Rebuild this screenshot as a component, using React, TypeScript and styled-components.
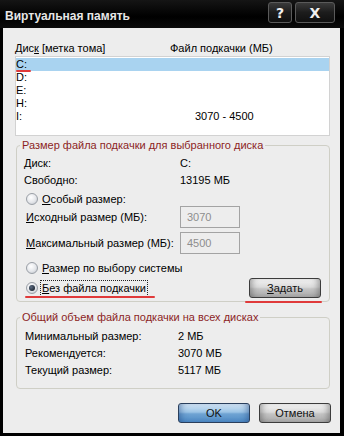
import React from 'react';
import styled, { createGlobalStyle } from 'styled-components';

const Global = createGlobalStyle`
  html, body { margin: 0; padding: 0; background: #000; }
  body { font-family: "Liberation Sans", Arial, sans-serif; font-size: 11px; color: #000; }
  * { box-sizing: border-box; }
`;

const Window = styled.div`
  width: 344px;
  height: 436px;
  background: #000;
  display: flex;
  flex-direction: column;
`;

const TitleBar = styled.div`
  height: 28px;
  flex: none;
  display: flex;
  justify-content: space-between;
  background: linear-gradient(#151515, #050505 45%, #000 60%, #0b0b0b);
`;

const Title = styled.div`
  padding: 9px 0 0 5px;
  line-height: 14px;
  font-size: 12px;
  font-weight: bold;
  color: #e6e6e6;
`;

const TitleButtons = styled.div`
  display: flex;
  gap: 3px;
  padding: 2px 9px 0 0;
`;

const CapButton = styled.div<{ $w: number }>`
  width: ${(p) => p.$w}px;
  height: 21px;
  border: 1px solid #5a5a5a;
  border-radius: 3px;
  background: linear-gradient(#3a3a3a, #1c1c1c 50%, #101010);
  color: #f0f0f0;
  font-weight: bold;
  font-size: 14px;
  display: flex;
  align-items: center;
  justify-content: center;
  font-family: "DejaVu Sans", sans-serif;
`;

const Frame = styled.div`
  flex: 1;
  display: flex;
  padding: 0 4px 3px 3px;
`;

const Client = styled.div`
  flex: 1;
  background: #ededed;
  padding: 14px 10px 0 12px;
  display: flex;
  flex-direction: column;
`;

const HeaderRow = styled.div`
  display: flex;
  height: 13px;
  line-height: 13px;
`;

const Cell = styled.div<{ $w?: number }>`
  width: ${(p) => (p.$w ? `${p.$w}px` : 'auto')};
  flex: none;
  white-space: nowrap;
`;

const ListBox = styled.div`
  position: relative;
  margin-top: 1px;
  height: 80px;
  border: 1px solid #d2d2d2;
  background: #fff;
  padding-top: 1px;
`;

const ListRow = styled.div<{ $sel?: boolean }>`
  display: flex;
  height: 13px;
  line-height: 13px;
  padding-left: 0px;
  background: ${(p) => (p.$sel ? '#a9d3f0' : 'transparent')};
`;

const Mark = styled.div<{ $x: number; $y: number; $w: number }>`
  position: absolute;
  left: ${(p) => p.$x}px;
  top: ${(p) => p.$y}px;
  width: ${(p) => p.$w}px;
  height: 2px;
  background: #e03a3a;
  border-radius: 1px;
`;

const Group = styled.fieldset<{ $mt: number }>`
  margin: ${(p) => p.$mt}px 0 0 1px;
  padding: 0 3px 0 3px;
  border: 1px solid #cfcfc6;
  border-radius: 4px;
  min-width: 0;
`;

const Legend = styled.legend`
  padding: 0 2px;
  line-height: 13px;
  color: #8c1f1f;
`;

const GroupBody = styled.div<{ $pl: number; $pt: number; $pb: number }>`
  position: relative;
  padding: ${(p) => p.$pt}px 5px ${(p) => p.$pb}px ${(p) => p.$pl}px;
  display: flex;
  flex-direction: column;
`;

const InfoRow = styled.div`
  display: flex;
  height: 17px;
  line-height: 17px;
`;

const RadioRow = styled.div<{ $mt: number; $h?: number }>`
  display: flex;
  align-items: center;
  margin: ${(p) => p.$mt}px 0 0 2px;
  height: ${(p) => p.$h ?? 14}px;
  justify-content: space-between;
`;

const RadioLabel = styled.div`
  display: flex;
  align-items: center;
  gap: 2px;
`;

const Radio = styled.div<{ $on?: boolean }>`
  width: 12px;
  height: 12px;
  border-radius: 50%;
  border: 1px solid #9a9fa6;
  background: radial-gradient(circle at 40% 35%, #ffffff, #e4e6ea 55%, #b9bec6);
  display: flex;
  align-items: center;
  justify-content: center;
  &::after {
    content: '';
    display: ${(p) => (p.$on ? 'block' : 'none')};
    width: 6px;
    height: 6px;
    border-radius: 50%;
    background: radial-gradient(circle at 35% 35%, #5a6a80, #10161f);
  }
`;

const FocusText = styled.span<{ $focus?: boolean }>`
  padding: 1px 1px;
  border: 1px dotted ${(p) => (p.$focus ? '#222' : 'transparent')};
  line-height: 13px;
  white-space: nowrap;
`;

const FieldRow = styled.div<{ $mt: number }>`
  display: flex;
  align-items: center;
  margin: ${(p) => p.$mt}px 0 0 2px;
  height: 22px;
`;

const TextBox = styled.div`
  width: 60px;
  height: 22px;
  border: 1px solid #a3a3a3;
  background: #ededed;
  color: #8e8e8e;
  padding: 3px 0 0 6px;
  line-height: 14px;
`;

const Button = styled.div<{ $primary?: boolean }>`
  width: 72px;
  height: 20px;
  border: 1px solid ${(p) => (p.$primary ? '#2a3f5c' : '#3c3c3c')};
  border-radius: 3px;
  display: flex;
  align-items: center;
  justify-content: center;
  line-height: 13px;
  background: ${(p) =>
    p.$primary
      ? 'linear-gradient(#d4e6f5, #9cc4e6 45%, #6fa3d3 55%, #4f8bc5)'
      : 'linear-gradient(#f4f4f4, #dadada 45%, #c4c4c4 55%, #a8a8a8)'};
  box-shadow: inset 6px 0 6px -4px ${(p) => (p.$primary ? 'rgba(30,70,130,0.5)' : 'rgba(60,60,60,0.45)')},
    inset -6px 0 6px -4px ${(p) => (p.$primary ? 'rgba(30,70,130,0.5)' : 'rgba(60,60,60,0.45)')};
  color: #111;
`;

const ButtonRow = styled.div`
  display: flex;
  justify-content: flex-end;
  gap: 9px;
  margin: 14px -1px 0 0;
`;

const Acc = styled.span`
  text-decoration: underline;
`;

export default function App() {
  return (
    <>
      <Global />
      <Window>
        <TitleBar>
          <Title>Виртуальная память</Title>
          <TitleButtons>
            <CapButton $w={24}>?</CapButton>
            <CapButton $w={40}>X</CapButton>
          </TitleButtons>
        </TitleBar>
        <Frame>
          <Client>
            <HeaderRow>
              <Cell $w={155}>
                Дис<Acc>к</Acc> [метка тома]
              </Cell>
              <Cell>Файл подкачки (МБ)</Cell>
            </HeaderRow>
            <ListBox>
              <ListRow $sel>
                <Cell $w={179}>C:</Cell>
              </ListRow>
              <ListRow>
                <Cell $w={179}>D:</Cell>
              </ListRow>
              <ListRow>
                <Cell $w={179}>E:</Cell>
              </ListRow>
              <ListRow>
                <Cell $w={179}>H:</Cell>
              </ListRow>
              <ListRow>
                <Cell $w={179}>I:</Cell>
                <Cell>3070 - 4500</Cell>
              </ListRow>
              <Mark $x={0} $y={13} $w={15} />
            </ListBox>

            <Group $mt={3}>
              <Legend>Размер файла подкачки для выбранного диска</Legend>
              <GroupBody $pl={4} $pt={3} $pb={3}>
                <InfoRow>
                  <Cell $w={156}>Диск:</Cell>
                  <Cell>C:</Cell>
                </InfoRow>
                <InfoRow>
                  <Cell $w={156}>Свободно:</Cell>
                  <Cell>13195 МБ</Cell>
                </InfoRow>
                <RadioRow $mt={3}>
                  <RadioLabel>
                    <Radio />
                    <FocusText>
                      <Acc>О</Acc>собый размер:
                    </FocusText>
                  </RadioLabel>
                </RadioRow>
                <FieldRow $mt={0}>
                  <Cell $w={154}>
                    <Acc>И</Acc>сходный размер (МБ):
                  </Cell>
                  <TextBox>3070</TextBox>
                </FieldRow>
                <FieldRow $mt={4}>
                  <Cell $w={154}>
                    <Acc>М</Acc>аксимальный размер (МБ):
                  </Cell>
                  <TextBox>4500</TextBox>
                </FieldRow>
                <RadioRow $mt={7}>
                  <RadioLabel>
                    <Radio />
                    <FocusText>
                      <Acc>Р</Acc>азмер по выбору системы
                    </FocusText>
                  </RadioLabel>
                </RadioRow>
                <RadioRow $mt={3} $h={20}>
                  <RadioLabel>
                    <Radio $on />
                    <FocusText $focus>
                      <Acc>Б</Acc>ез файла подкачки
                    </FocusText>
                  </RadioLabel>
                  <Button>
                    <span>
                      <Acc>З</Acc>адать
                    </span>
                  </Button>
                </RadioRow>
                <Mark $x={5} $y={144} $w={130} />
                <Mark $x={225} $y={149} $w={77} />
              </GroupBody>
            </Group>

            <Group $mt={9}>
              <Legend>Общий объем файла подкачки на всех дисках</Legend>
              <GroupBody $pl={5} $pt={4} $pb={9}>
                <InfoRow>
                  <Cell $w={153}>Минимальный размер:</Cell>
                  <Cell>2 МБ</Cell>
                </InfoRow>
                <InfoRow>
                  <Cell $w={153}>Рекомендуется:</Cell>
                  <Cell>3070 МБ</Cell>
                </InfoRow>
                <InfoRow>
                  <Cell $w={153}>Текущий размер:</Cell>
                  <Cell>5117 МБ</Cell>
                </InfoRow>
              </GroupBody>
            </Group>

            <ButtonRow>
              <Button $primary>OK</Button>
              <Button>Отмена</Button>
            </ButtonRow>
          </Client>
        </Frame>
      </Window>
    </>
  );
}
